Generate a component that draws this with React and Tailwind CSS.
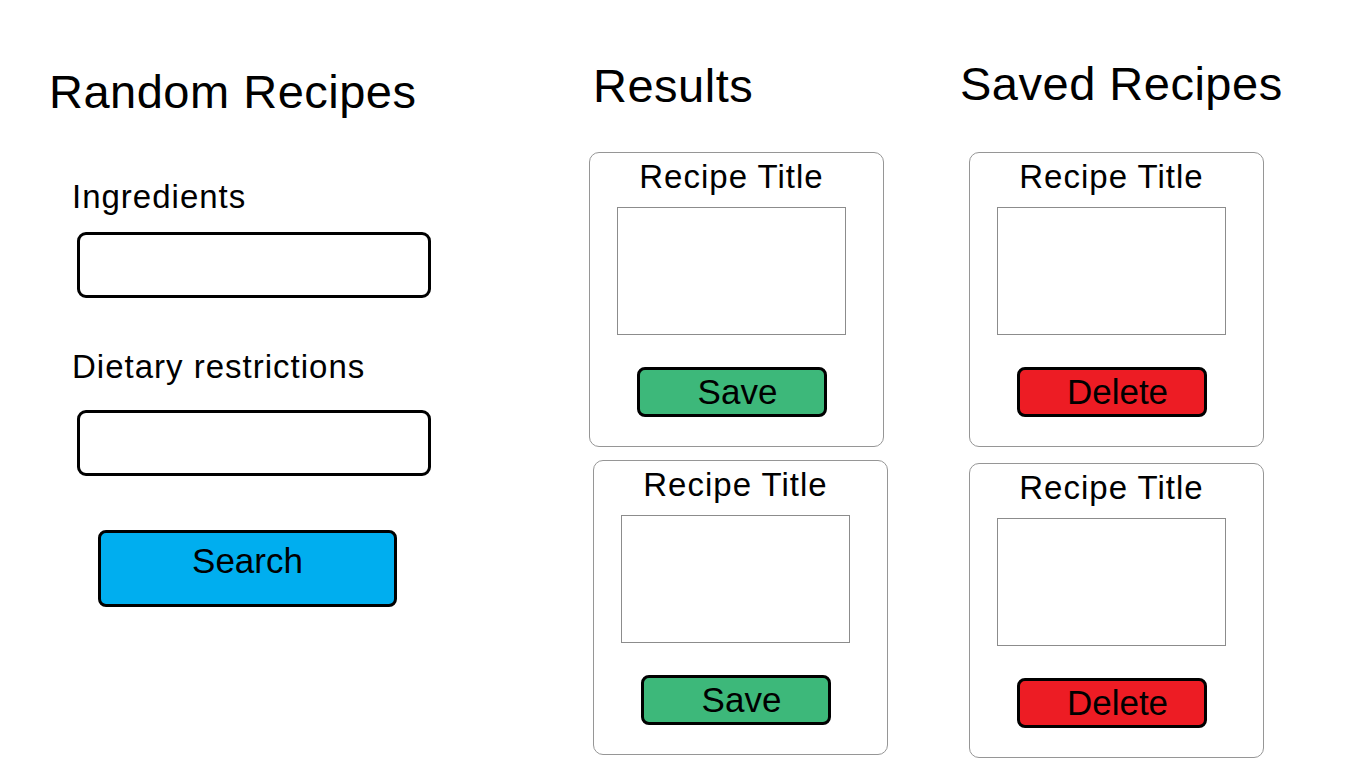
// App.jsx

const recipes = [1, 2];

function RecipeCard({ kind, className = '' }) {
    const isSave = kind === 'save';
    return (
        <div className={`w-[295px] h-[295px] border border-[#969696] rounded-[10px] pl-[27px] pt-[4px] ${className}`}>
            <div className="w-[229px] flex flex-col items-center">
                <h3 className="text-[33px] leading-[40px] tracking-[1px] text-black">Recipe Title</h3>
                {/* image placeholder */}
                <div className="mt-[10px] w-[229px] h-[128px] border border-[#8c8c8c] bg-white"></div>
                <button
                    type="button"
                    className={`mt-[32px] w-[190px] h-[50px] border-[3px] border-black rounded-[8px] flex items-center justify-center pl-3 text-[35px] leading-[40px] text-black ${isSave ? 'bg-[#3db87a]' : 'bg-[#ed1c24]'}`}
                >
                    {isSave ? 'Save' : 'Delete'}
                </button>
            </div>
        </div>
    );
}

function App() {
    return (
        <div className="w-[1366px] h-[768px] bg-white flex font-['Liberation_Sans',Arial,sans-serif] text-black overflow-hidden">
            {/* --- Search form --- */}
            <div className="w-[589px] flex flex-col items-start">
                <h1 className="mt-[65px] ml-[49px] text-[47px] leading-[54px] tracking-[0.5px]">Random Recipes</h1>

                <label htmlFor="ingredients" className="mt-[58px] ml-[72px] text-[33px] leading-[40px] tracking-[1px]">Ingredients</label>
                <input id="ingredients" type="text" className="mt-[15px] ml-[77px] w-[354px] h-[66px] border-[3px] border-black rounded-[9px] bg-white px-3 text-2xl outline-none" />

                <label htmlFor="dietary" className="mt-[49px] ml-[72px] text-[33px] leading-[40px] tracking-[1px]">Dietary restrictions</label>
                <input id="dietary" type="text" className="mt-[23px] ml-[77px] w-[354px] h-[66px] border-[3px] border-black rounded-[9px] bg-white px-3 text-2xl outline-none" />

                <button type="button" className="mt-[54px] ml-[98px] w-[299px] h-[77px] border-[3px] border-black rounded-[8px] bg-[#00aeef] flex items-center justify-center pb-4 text-[35px] leading-[40px]">
                    Search
                </button>
            </div>

            {/* --- Results --- */}
            <div className="w-[371px] flex flex-col items-start">
                <h2 className="mt-[59px] ml-[4px] text-[47px] leading-[54px] tracking-[0.5px]">Results</h2>
                <RecipeCard kind="save" className="mt-[39px]" />
                <RecipeCard kind="save" className="mt-[13px] ml-[4px]" />
            </div>

            {/* --- Saved recipes --- */}
            <div className="flex-1 flex flex-col items-start">
                <h2 className="mt-[57px] text-[47px] leading-[54px] tracking-[0.5px]">Saved Recipes</h2>
                {recipes.map((r, i) => (
                    <RecipeCard key={r} kind="delete" className={i === 0 ? 'mt-[41px] ml-[9px]' : 'mt-[16px] ml-[9px]'} />
                ))}
            </div>
        </div>
    );
}

export default App;
